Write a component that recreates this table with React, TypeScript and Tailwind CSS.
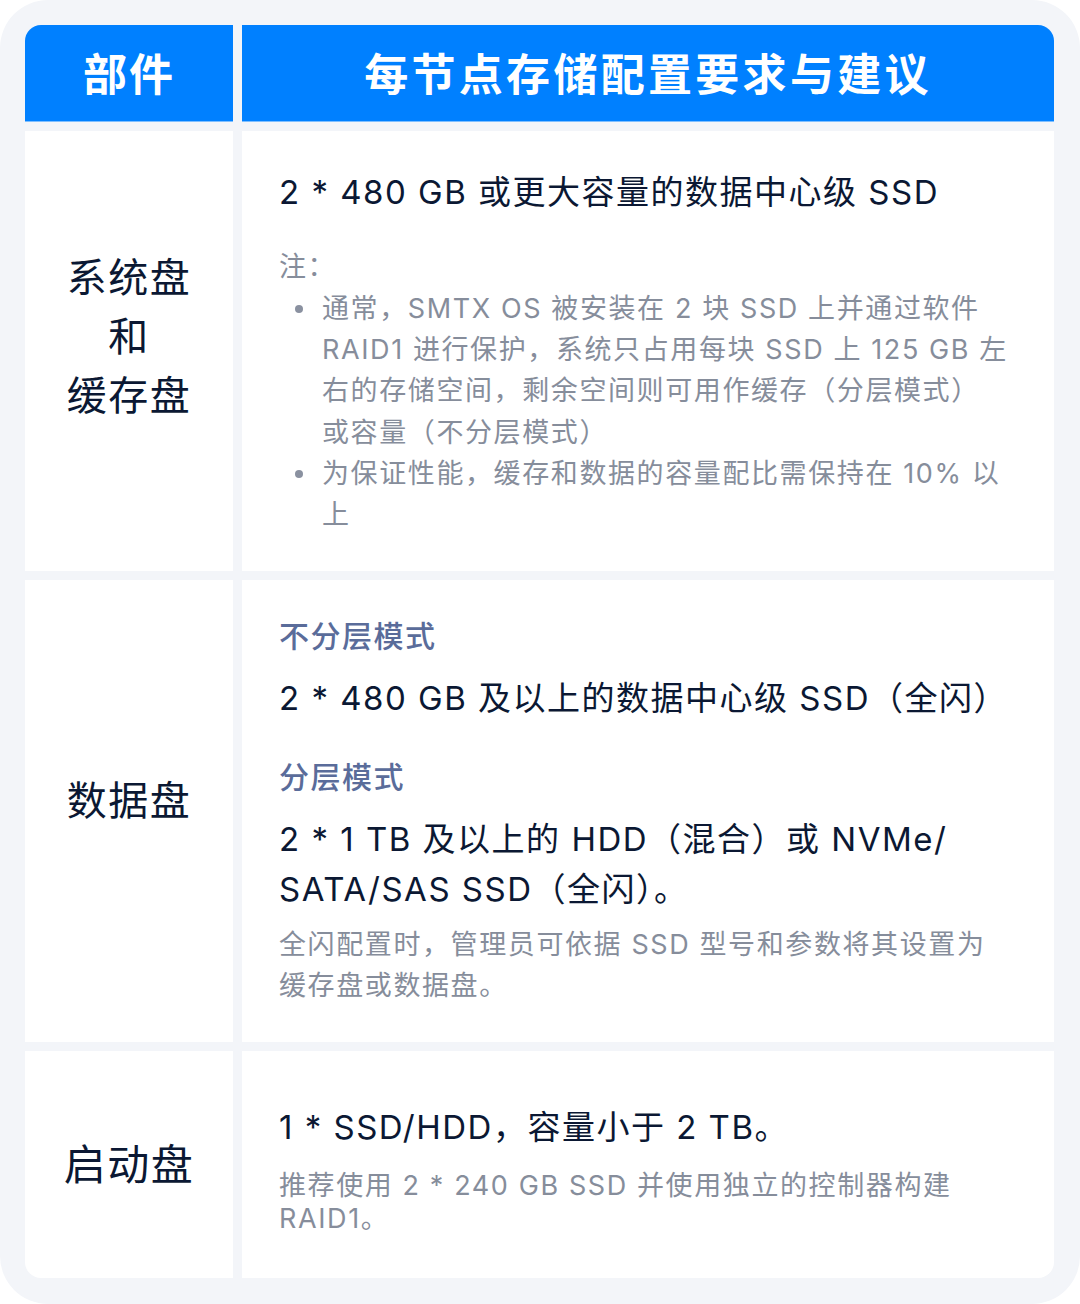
const FONT = { fontFamily: 'Inter, "Noto Sans CJK SC", sans-serif' };

function Label({ children, big, shift }: { children: React.ReactNode; big?: boolean; shift?: string }) {
  return (
    <div className={`w-[208px] shrink-0 bg-white flex items-center justify-center text-center ${shift ?? ''}`}>
      <div className={`${big ? 'text-[42px]' : 'text-[40px]'} leading-[59px] tracking-[1.5px] text-[#0b1833]`}>{children}</div>
    </div>
  );
}

function Bullet({ children }: { children: React.ReactNode }) {
  return (
    <li className="flex">
      <span className="w-[43px] shrink-0 flex justify-center pt-[17px] pr-[3px]">
        <span className="w-[8px] h-[8px] rounded-full bg-[#8a91a0]" />
      </span>
      <span>{children}</span>
    </li>
  );
}

export default function App() {
  return (
    <div className="w-[1080px] h-[1304px] bg-white" style={FONT}>
      <div className="w-full h-full rounded-[48px] bg-[#f3f5f9] pt-[25px] pl-[25px] pr-[26px] pb-[26px]">
        <div className="flex flex-col gap-[9px] h-full">
          {/* header */}
          <div className="flex gap-[9px] h-[97px]">
            <div className="w-[208px] shrink-0 bg-[#0080ff] rounded-tl-[16px] flex items-center justify-center border-b border-[#7fbfff] pt-[4px]">
              <span className="text-[44px] font-bold text-white tracking-[2px]">部件</span>
            </div>
            <div className="flex-1 bg-[#0080ff] rounded-tr-[16px] flex items-center justify-center border-b border-[#7fbfff] pt-[4px]">
              <span className="text-[44px] font-bold text-white tracking-[3.3px]">每节点存储配置要求与建议</span>
            </div>
          </div>

          {/* row 1 */}
          <div className="flex gap-[9px] h-[440px]">
            <Label shift="pb-[30px]">
              系统盘
              <br />和<br />
              缓存盘
            </Label>
            <div className="flex-1 bg-white flex flex-col justify-center pl-[37px] pr-[30px] pt-[4px]">
              <p className="text-[33px] text-[#0b1833] leading-[44px] tracking-[1.5px]">2 * 480 GB 或更大容量的数据中心级 SSD</p>
              <div className="mt-[32px] text-[27px] leading-[41.3px] tracking-[1.6px] text-[#868d9b]">
                <p>注：</p>
                <ul>
                  <Bullet>
                    通常，SMTX OS 被安装在 2 块 SSD 上并通过软件 RAID1 进行保护，系统只占用每块 SSD 上 125 GB 左右的存储空间，剩余空间则可用作缓存（分层模式）
                    <br />
                    或容量（不分层模式）
                  </Bullet>
                  <Bullet>为保证性能，缓存和数据的容量配比需保持在 10% 以上</Bullet>
                </ul>
              </div>
            </div>
          </div>

          {/* row 2 */}
          <div className="flex gap-[9px] h-[462px]">
            <Label shift="pb-[22px]">数据盘</Label>
            <div className="flex-1 bg-white flex flex-col justify-center pl-[37px] pr-[40px]">
              <p className="text-[30px] leading-[40px] font-medium tracking-[1.5px] text-[#5a6c9a]">不分层模式</p>
              <p className="mt-[20px] text-[33px] leading-[44px] tracking-[1.5px] text-[#0b1833]">2 * 480 GB 及以上的数据中心级 SSD（全闪）</p>
              <p className="mt-[37px] text-[30px] leading-[40px] font-medium tracking-[1.5px] text-[#5a6c9a]">分层模式</p>
              <p className="mt-[17px] text-[33px] leading-[50px] tracking-[1.5px] text-[#0b1833] pr-[60px]">
                2 * 1 TB 及以上的 HDD（混合）或 NVMe/ SATA/SAS SSD（全闪）。
              </p>
              <p className="mt-[10px] text-[27px] leading-[41px] tracking-[1.6px] text-[#868d9b]">
                全闪配置时，管理员可依据 SSD 型号和参数将其设置为缓存盘或数据盘。
              </p>
            </div>
          </div>

          {/* row 3 */}
          <div className="flex gap-[9px] flex-1">
            <div className="w-[208px] shrink-0 bg-white rounded-bl-[16px] flex items-center justify-center">
              <span className="text-[42px] tracking-[1.5px] text-[#0b1833]">启动盘</span>
            </div>
            <div className="flex-1 bg-white rounded-br-[16px] flex flex-col justify-center pl-[37px] pr-[40px] pt-[10px]">
              <p className="text-[33px] leading-[44px] tracking-[1.5px] text-[#0b1833]">1 * SSD/HDD，容量小于 2 TB。</p>
              <p className="mt-[20px] text-[27px] leading-[33px] tracking-[1.6px] text-[#868d9b] pr-[60px]">
                推荐使用 2 * 240 GB SSD 并使用独立的控制器构建 RAID1。
              </p>
            </div>
          </div>
        </div>
      </div>
    </div>
  );
}
